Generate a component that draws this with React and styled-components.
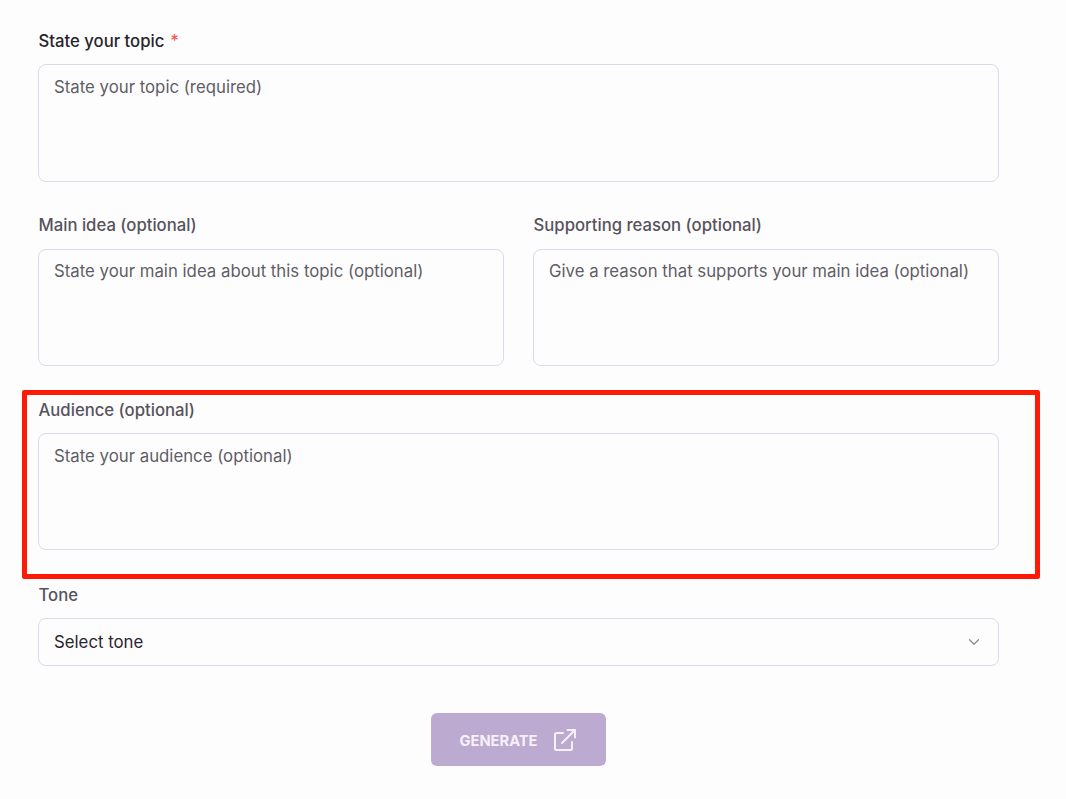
import React from 'react'
import styled, { createGlobalStyle } from 'styled-components'
import { ChevronDown } from 'lucide-react'

const GlobalStyle = createGlobalStyle`
  html, body {
    margin: 0;
    padding: 0;
    background: #fefdfe;
  }
  * {
    box-sizing: border-box;
  }
`

const Page = styled.div`
  width: 1066px;
  height: 799px;
  padding: 29px 67px 0 38px;
  font-family: Inter, "Liberation Sans", sans-serif;
  display: flex;
  flex-direction: column;
  gap: 32px;
  overflow: hidden;
`

const Field = styled.div`
  position: relative;
  display: flex;
  flex-direction: column;
  gap: 11px;
  margin-top: ${p => p.$push || 0}px;
`

const Label = styled.label`
  font-size: 16.7px;
  line-height: 24px;
  font-weight: 500;
  height: 24px;
  padding-left: 0.5px;
  color: ${p => (p.$strong ? '#27242a' : '#57525c')};
`

const Star = styled.span`
  color: #f25a5a;
  margin-left: 6px;
`

const TextBox = styled.div`
  height: ${p => p.$h || 118}px;
  border: 1px solid #e0d8ea;
  border-radius: 8px;
  background: #fefdfe;
  padding: 10px 15px;
  font-size: 16.8px;
  line-height: 24px;
  color: #5f5d66;
`

const Row = styled.div`
  display: grid;
  grid-template-columns: 466px 466px;
  column-gap: 29px;
  ${Label} {
    line-height: 22px;
  }
  ${TextBox} {
    padding-top: 9px;
  }
`

const SelectBox = styled.div`
  height: 48px;
  border: 1px solid #e0d8ea;
  border-radius: 8px;
  padding: 0 15px;
  display: flex;
  align-items: center;
  justify-content: space-between;
  font-size: 16.8px;
  color: #2a2630;
  svg {
    color: #8b8b90;
  }
`

const Highlight = styled.div`
  position: absolute;
  left: -16px;
  top: -8px;
  width: 1018px;
  height: 189px;
  border: 5px solid #ff1a08;
  border-radius: 2px;
  pointer-events: none;
`

const Actions = styled.div`
  display: flex;
  justify-content: center;
  margin-top: 15px;
`

const GenerateButton = styled.button`
  width: 175px;
  height: 53px;
  border: 0;
  border-radius: 6px;
  background: #bdaad1;
  color: #f6f1f9;
  font-family: Inter, Roboto, sans-serif;
  font-size: 14.7px;
  font-weight: 700;
  display: flex;
  align-items: center;
  justify-content: center;
  gap: 16px;
  padding: 0 2px 0 0;
`

const ButtonText = styled.span`
  padding-top: 2px;
`

const ExternalIcon = () => (
  <svg width="22" height="22" viewBox="0 0 22 22" fill="none" stroke="#f6f1f9" strokeWidth="2" strokeLinecap="round" strokeLinejoin="round">
    <path d="M9 4H2.5A1.5 1.5 0 0 0 1 5.500V19.500A1.500 1.500 0 0 0 2.500 21H16.500A1.500 1.500 0 0 0 18 19.500V13" />
    <path d="M8 14L20.500 1.500" />
    <path d="M13.500 1H21V8.500" />
  </svg>
)

export default function App() {
  return (
    <>
      <GlobalStyle />
      <Page>
        <Field>
          <Label $strong>State your topic<Star>*</Star></Label>
          <TextBox>State your topic (required)</TextBox>
        </Field>
        <Row>
          <Field>
            <Label>Main idea (optional)</Label>
            <TextBox $h={117}>State your main idea about this topic (optional)</TextBox>
          </Field>
          <Field>
            <Label>Supporting reason (optional)</Label>
            <TextBox $h={117}>Give a reason that supports your main idea (optional)</TextBox>
          </Field>
        </Row>
        <Field>
          <Label>Audience (optional)</Label>
          <TextBox $h={117}>State your audience (optional)</TextBox>
          <Highlight />
        </Field>
        <Field $push={1}>
          <Label>Tone</Label>
          <SelectBox>
            Select tone
            <ChevronDown size={18} strokeWidth={1.75} />
          </SelectBox>
        </Field>
        <Actions>
          <GenerateButton>
            <ButtonText>GENERATE</ButtonText>
            <ExternalIcon />
          </GenerateButton>
        </Actions>
      </Page>
    </>
  )
}
